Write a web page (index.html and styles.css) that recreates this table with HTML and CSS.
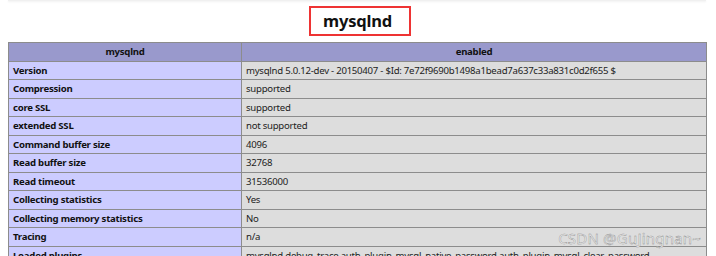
FILE: index.html
```html
<!DOCTYPE html>
<html>
<head>
<meta charset="utf-8">
<link rel="stylesheet" href="styles.css">
</head>
<body>
<div class="prev"></div>
<h2 class="title"><span class="mark">mysqlnd</span></h2>
<table class="info">
<tr class="h"><th>mysqlnd</th><th>enabled</th></tr>
<tr><td class="e">Version</td><td class="v">mysqlnd 5.0.12-dev - 20150407 - $Id: 7e72f9690b1498a1bead7a637c33a831c0d2f655 $</td></tr>
<tr><td class="e">Compression</td><td class="v">supported</td></tr>
<tr><td class="e">core SSL</td><td class="v">supported</td></tr>
<tr><td class="e">extended SSL</td><td class="v">not supported</td></tr>
<tr><td class="e">Command buffer size</td><td class="v">4096</td></tr>
<tr><td class="e">Read buffer size</td><td class="v">32768</td></tr>
<tr><td class="e">Read timeout</td><td class="v">31536000</td></tr>
<tr><td class="e">Collecting statistics</td><td class="v">Yes</td></tr>
<tr><td class="e">Collecting memory statistics</td><td class="v">No</td></tr>
<tr><td class="e">Tracing</td><td class="v">n/a</td></tr>
<tr><td class="e">Loaded plugins</td><td class="v">mysqlnd,debug_trace,auth_plugin_mysql_native_password,auth_plugin_mysql_clear_password</td></tr>
</table>
<div class="watermark">CSDN @GuJingnan~</div>
</body>
</html>
```

FILE: styles.css
```css
html, body {
  margin: 0;
  padding: 0;
  background: #fff;
  overflow: hidden;
}
body {
  position: relative;
  width: 716px;
  height: 256px;
  font-family: "Noto Sans", "Open Sans", sans-serif;
  color: #222;
}
.prev {
  margin: 0 10px 0 8px;
  height: 1px;
  background: #f0f0f0;
  box-shadow: 0 1px 2px rgba(0,0,0,0.08);
}
.title {
  margin: 5px 0 6px;
  text-align: center;
  font-size: 16.5px;
  font-weight: 700;
  line-height: 26px;
  color: #111;
  padding-left: 4px;
}
.mark {
  display: inline-block;
  border: 2px solid #ee3333;
  padding: 0 17px 0 12px;
  letter-spacing: -0.2px;
}
.info {
  margin-left: 8px;
  width: 699px;
  border-collapse: collapse;
  font-size: 9.6px;
  letter-spacing: -0.25px;
  table-layout: fixed;
}
.info th, .info td {
  border: 1px solid #8c8c8c;
  padding: 3px 4px;
  line-height: 11.5px;
  white-space: nowrap;
  overflow: hidden;
  vertical-align: middle;
}
.info th:first-child, .info td.e {
  width: 224px;
}
.info th {
  background: #9999cc;
  font-weight: 700;
  text-align: center;
  color: #111;
}
.info td.e {
  background: #ccccff;
  font-weight: 700;
  color: #111;
}
.info td.v {
  background: #dddddd;
  color: #222;
}
.watermark {
  position: absolute;
  right: 15px;
  top: 228px;
  font-size: 15px;
  font-family: "Noto Sans", sans-serif;
  color: #f4f4f4;
  -webkit-text-stroke: 0.4px #888;
  letter-spacing: 0.2px;
}
```
